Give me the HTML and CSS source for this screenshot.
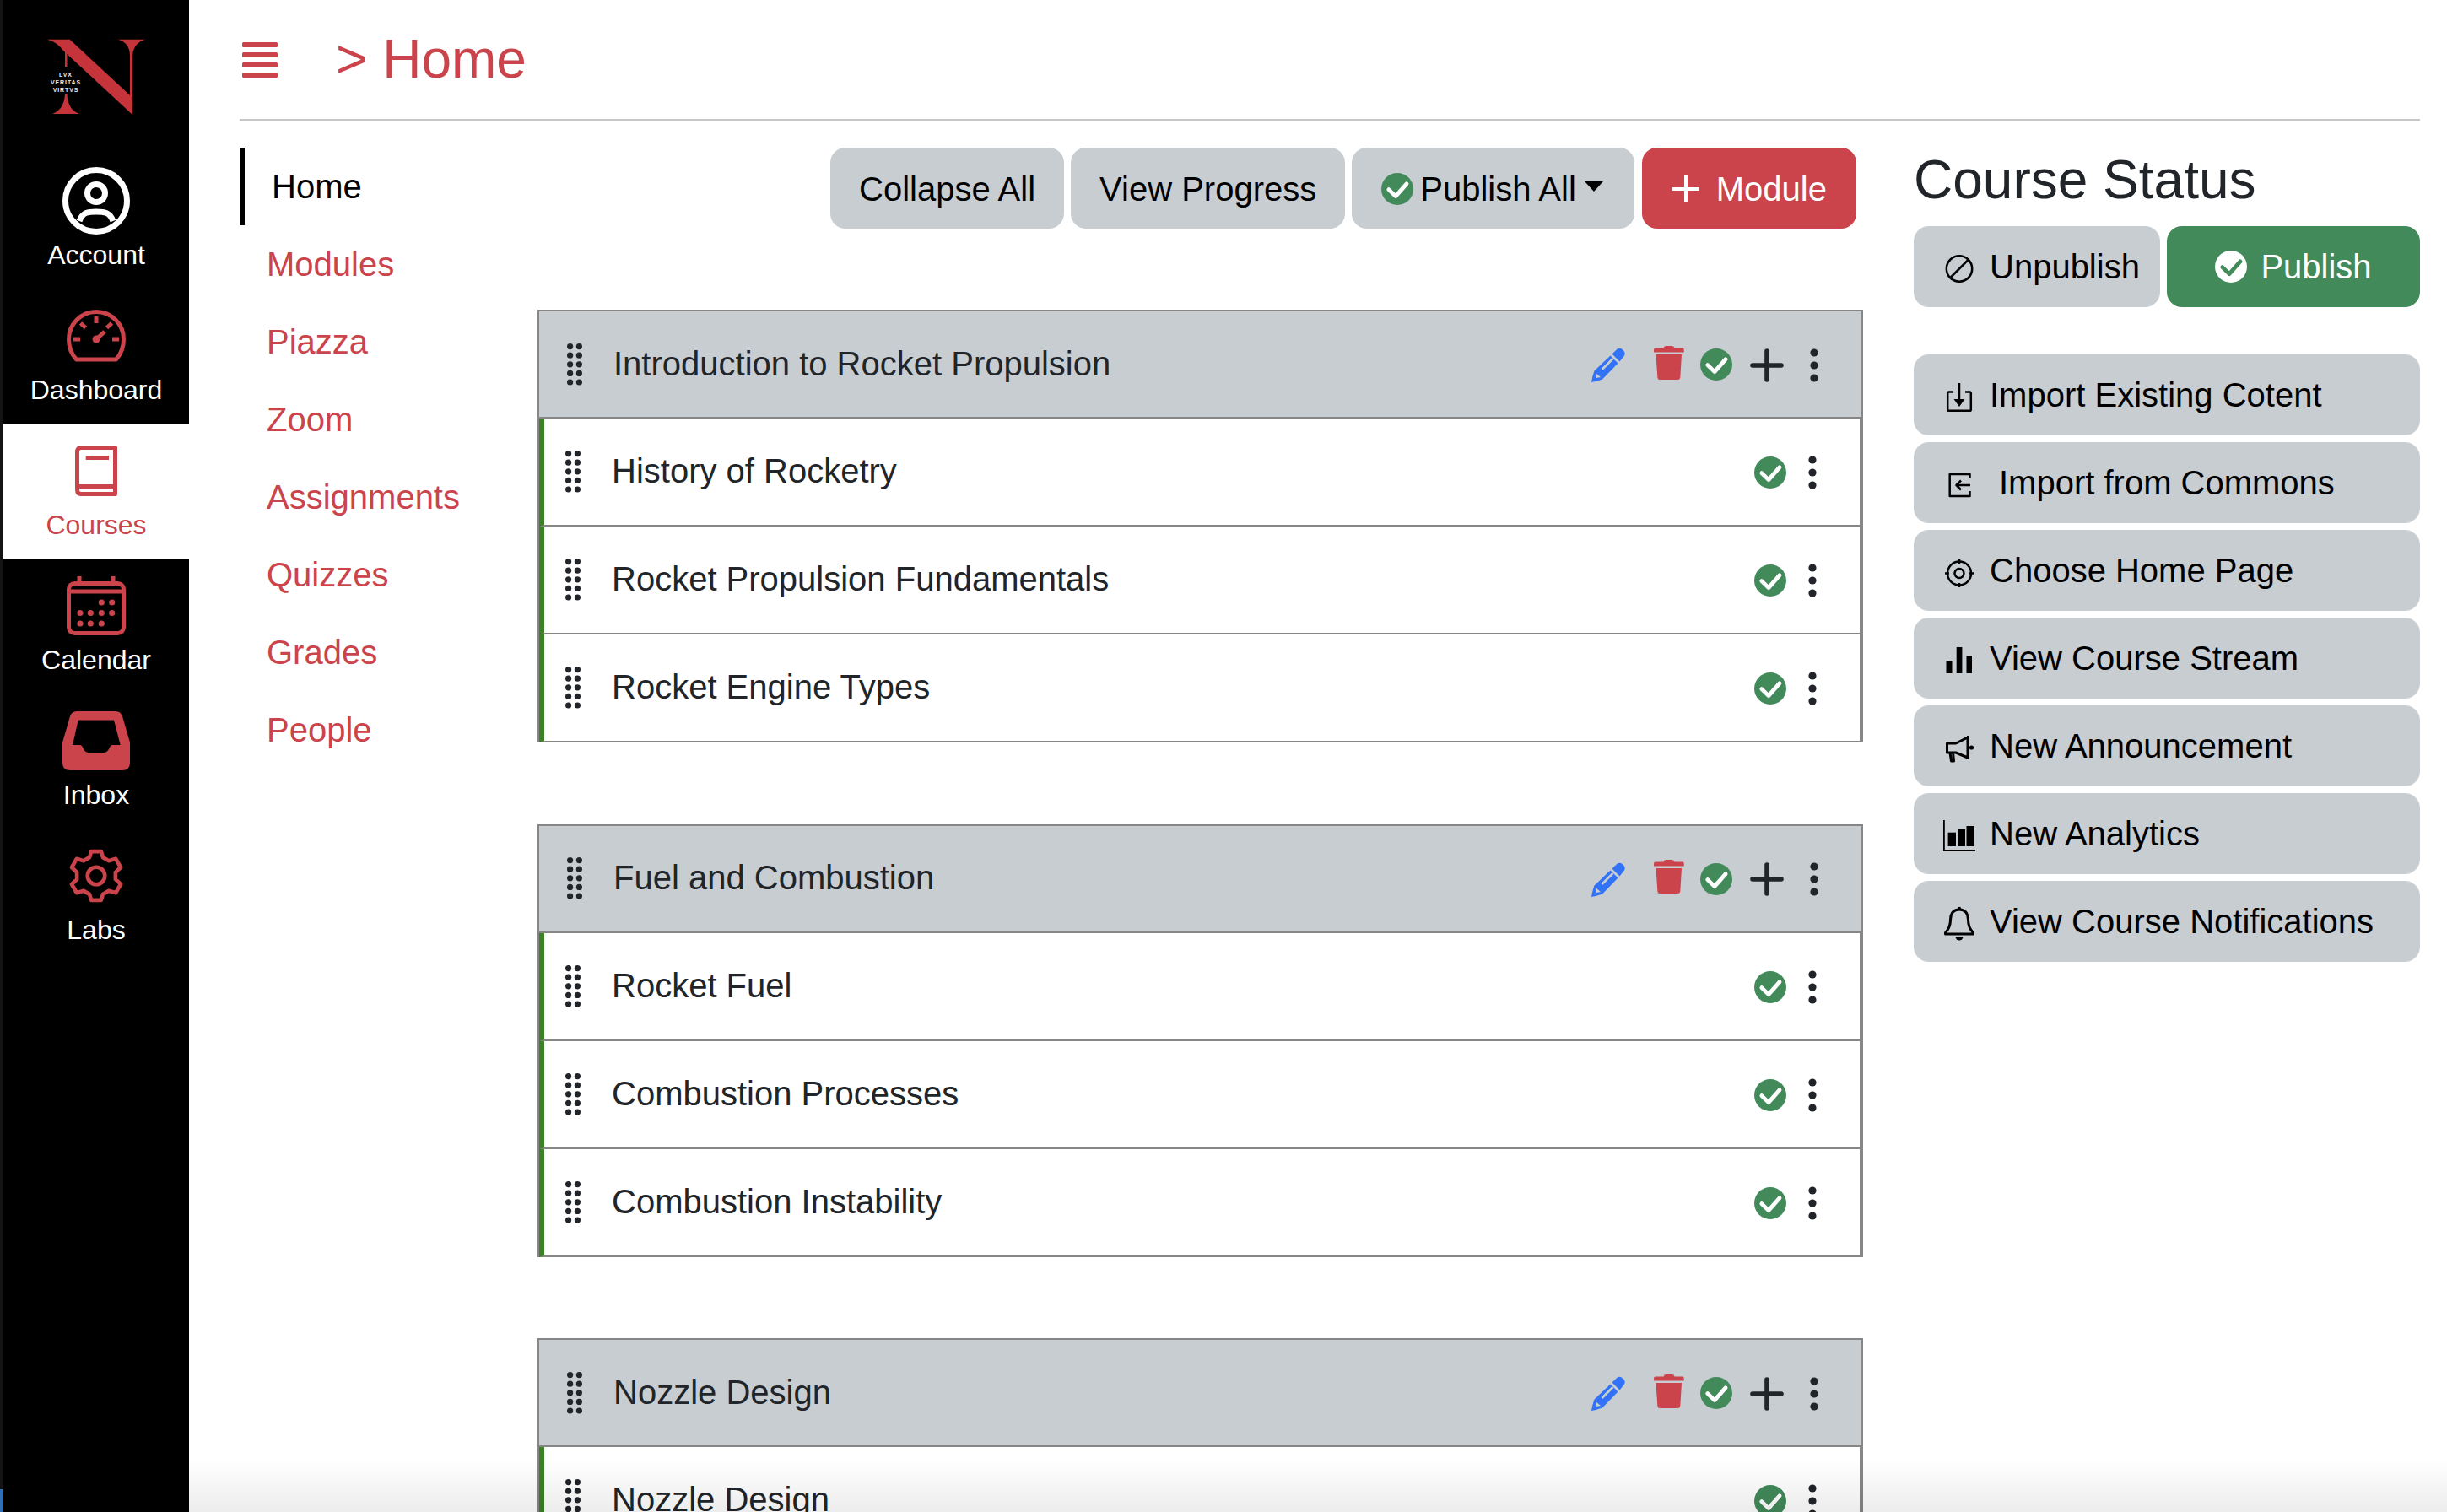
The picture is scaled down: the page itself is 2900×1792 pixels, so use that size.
FILE: index.html
```html
<!DOCTYPE html>
<html lang="en">
<head>
<meta charset="utf-8">
<title>Home</title>
<link rel="stylesheet" href="styles.css">
</head>
<body>
<svg class="defs" aria-hidden="true">
  <symbol id="chk" viewBox="0 0 38 38"><circle class="disc" cx="19" cy="19" r="19"/><path class="tick" d="M8.8 19.6 L17 27.6 L30 12.8"/></symbol>
  <symbol id="grip" viewBox="0 0 18 50"><g class="fillc"><circle cx="3.6" cy="3.6" r="3.6"/><circle cx="14.4" cy="3.6" r="3.6"/><circle cx="3.6" cy="14.2" r="3.6"/><circle cx="14.4" cy="14.2" r="3.6"/><circle cx="3.6" cy="24.8" r="3.6"/><circle cx="14.4" cy="24.8" r="3.6"/><circle cx="3.6" cy="35.4" r="3.6"/><circle cx="14.4" cy="35.4" r="3.6"/><circle cx="3.6" cy="46" r="3.6"/><circle cx="14.4" cy="46" r="3.6"/></g></symbol>
  <symbol id="kebab" viewBox="0 0 10 40"><g class="fillc"><circle cx="5" cy="5" r="4.6"/><circle cx="5" cy="20" r="4.6"/><circle cx="5" cy="35" r="4.6"/></g></symbol>
  <symbol id="pencil" viewBox="0 0 40 41"><path class="blue" d="M24.5 7.5 L30.5 1.7 Q33 0 35.5 1.2 L38.5 4 Q40.5 6.5 39 9.5 L33.5 16.5 Z"/><path class="blue" d="M22.5 9.5 L31.5 18.5 L13 37.5 Q6 40 0 41 Q1 34 3.5 27.5 Z"/><path class="slit" d="M12.5 26 L25.5 13"/><path class="slit2" d="M5.5 30.5 L6 36 L11 35"/></symbol>
  <symbol id="trash" viewBox="0 0 36 40"><path class="redf" d="M11.5 2.4 Q12 0 15 0 H21 Q24 0 24.5 2.4 H34 Q35.7 2.4 35.7 4.5 V7.5 H0 V4.5 Q0 2.4 2 2.4 Z"/><path class="redf" d="M2.4 10 H33 L31.3 37.5 Q31 40 28.5 40 H7 Q4.6 40 4.4 37.5 Z"/></symbol>
  <symbol id="plus" viewBox="0 0 40 40"><path class="plusline" d="M20 3 V37 M3 20 H37"/></symbol>
</svg>

<div class="app">
  <aside class="rail">
    <div class="logo">
      <svg width="116" height="90" viewBox="56 46 116 90">
        <path class="logo-n" d="M56 46.7 H82.7 L154 113 V66 Q154 51 140 46.7 H172 Q158 51 157 66 V136 L75 60 Q68 50 56 46.7 Z"/>
        <path class="logo-n" d="M77 58 H79.5 V79 H77 Z M77 111 H79.5 Q80 130 94 135 H62 Q76 130 77 111 Z"/>
        <text class="logo-t" x="78" y="91">LVX</text>
        <text class="logo-t" x="78" y="100">VERITAS</text>
        <text class="logo-t" x="78" y="108.5">VIRTVS</text>
      </svg>
    </div>
    <a class="rail-item">
      <svg class="rail-icon" viewBox="0 0 80 80"><g class="st-w"><circle cx="40" cy="40" r="36.5"/><circle cx="40" cy="31" r="10.5"/><path d="M20 64 C24 53 31 53 40 53 C49 53 56 53 60 64"/></g></svg>
      <span class="rail-label">Account</span>
    </a>
    <a class="rail-item">
      <svg class="rail-icon" viewBox="0 0 80 80"><g class="st-r"><path d="M16.5 68 H63.5 C69 62 72.5 54 72.5 44 A32.5 32.5 0 0 0 7.5 44 C7.5 54 11 62 16.5 68 Z"/><path d="M40 17 V25 M13 44 H21 M59 44 H67 M21.5 25 L27.5 30.5 M58.5 25 L52.5 30.5 M40 44 L50 35"/></g><circle class="redf" cx="40" cy="44" r="4.5"/></svg>
      <span class="rail-label">Dashboard</span>
    </a>
    <a class="rail-item is-active">
      <svg class="rail-icon" viewBox="0 0 80 80"><g class="st-r"><path d="M62.5 12.5 H22 Q17.5 12.5 17.5 18 V62 Q17.5 67.5 22 67.5 H62.5 Z"/><path d="M18.5 58.5 H62 M27.7 24.5 H55"/></g></svg>
      <span class="rail-label">Courses</span>
    </a>
    <a class="rail-item">
      <svg class="rail-icon" viewBox="0 0 80 80"><g class="st-r"><rect x="7.5" y="13.5" width="65" height="59" rx="7"/><path d="M7 23 H73 M20 5 V12 M60 5 V12"/></g><g class="redf"><circle cx="46.3" cy="36" r="3.6"/><circle cx="58.7" cy="36" r="3.6"/><circle cx="21" cy="48.5" r="3.6"/><circle cx="33.3" cy="48.5" r="3.6"/><circle cx="46.3" cy="48.5" r="3.6"/><circle cx="58.7" cy="48.5" r="3.6"/><circle cx="21" cy="61" r="3.6"/><circle cx="33.3" cy="61" r="3.6"/><circle cx="46.3" cy="61" r="3.6"/></g></svg>
      <span class="rail-label">Calendar</span>
    </a>
    <a class="rail-item">
      <svg class="rail-icon" viewBox="0 0 80 80"><path class="redf even" d="M17 5 H63 Q69 5 71 11 L80 42 V66 Q80 75 71 75 H9 Q0 75 0 66 V42 L9 11 Q11 5 17 5 Z M18.7 15.5 L12 45 H21 C25 45 24 54 31 54 H49 C56 54 55 45 59 45 H68.7 L61 15.5 Z"/></svg>
      <span class="rail-label">Inbox</span>
    </a>
    <a class="rail-item">
      <svg class="rail-icon" viewBox="-3 -3 86 86"><g class="st-r gear"><path d="M48.55 16.5 L46.3 9 H33.7 L31.45 16.5 L23.9 20.85 L15.1 18.35 L8.8 29.25 L15.4 35.65 V44.35 L8.8 50.75 L15.1 61.65 L23.9 59.15 L31.45 63.5 L33.7 71 H46.3 L48.55 63.5 L56.1 59.15 L64.9 61.65 L71.2 50.75 L64.6 44.35 V35.65 L71.2 29.25 L64.9 18.35 L56.1 20.85 Z"/><circle cx="40" cy="40" r="11"/></g></svg>
      <span class="rail-label">Labs</span>
    </a>
  </aside>

  <main class="main">
    <header class="topbar">
      <svg class="burger" width="42" height="42" viewBox="0 0 42 42"><g class="redf"><rect y="0" width="42" height="6" rx="1.5"/><rect y="12" width="42" height="6" rx="1.5"/><rect y="24" width="42" height="6" rx="1.5"/><rect y="36" width="42" height="6" rx="1.5"/></g></svg>
      <h1 class="crumb">&gt; Home</h1>
    </header>

    <div class="columns">
      <nav class="course-nav">
        <a class="course-link is-current">Home</a>
        <a class="course-link">Modules</a>
        <a class="course-link">Piazza</a>
        <a class="course-link">Zoom</a>
        <a class="course-link">Assignments</a>
        <a class="course-link">Quizzes</a>
        <a class="course-link">Grades</a>
        <a class="course-link">People</a>
      </nav>

      <section class="content">
        <div class="toolbar">
          <button class="btn btn-tool">Collapse All</button>
          <button class="btn btn-tool">View Progress</button>
          <button class="btn btn-publish-all"><svg class="chk chk-green"><use href="#chk"/></svg>Publish All<span class="caret"></span></button>
          <button class="btn btn-red"><svg class="btn-plus" viewBox="0 0 32 32"><path d="M16 1 V31 M1 16 H31"/></svg>Module</button>
        </div>

        <article class="module">
          <div class="mod-head">
            <svg class="grip"><use href="#grip"/></svg>
            <span class="mod-title">Introduction to Rocket Propulsion</span>
            <svg class="a-pencil"><use href="#pencil"/></svg>
            <svg class="a-trash"><use href="#trash"/></svg>
            <svg class="chk chk-green a-chk"><use href="#chk"/></svg>
            <svg class="a-plus"><use href="#plus"/></svg>
            <svg class="kebab"><use href="#kebab"/></svg>
          </div>
          <div class="lesson"><svg class="grip"><use href="#grip"/></svg><span class="mod-title">History of Rocketry</span><svg class="chk chk-green"><use href="#chk"/></svg><svg class="kebab"><use href="#kebab"/></svg></div>
          <div class="lesson"><svg class="grip"><use href="#grip"/></svg><span class="mod-title">Rocket Propulsion Fundamentals</span><svg class="chk chk-green"><use href="#chk"/></svg><svg class="kebab"><use href="#kebab"/></svg></div>
          <div class="lesson"><svg class="grip"><use href="#grip"/></svg><span class="mod-title">Rocket Engine Types</span><svg class="chk chk-green"><use href="#chk"/></svg><svg class="kebab"><use href="#kebab"/></svg></div>
        </article>

        <article class="module">
          <div class="mod-head">
            <svg class="grip"><use href="#grip"/></svg>
            <span class="mod-title">Fuel and Combustion</span>
            <svg class="a-pencil"><use href="#pencil"/></svg>
            <svg class="a-trash"><use href="#trash"/></svg>
            <svg class="chk chk-green a-chk"><use href="#chk"/></svg>
            <svg class="a-plus"><use href="#plus"/></svg>
            <svg class="kebab"><use href="#kebab"/></svg>
          </div>
          <div class="lesson"><svg class="grip"><use href="#grip"/></svg><span class="mod-title">Rocket Fuel</span><svg class="chk chk-green"><use href="#chk"/></svg><svg class="kebab"><use href="#kebab"/></svg></div>
          <div class="lesson"><svg class="grip"><use href="#grip"/></svg><span class="mod-title">Combustion Processes</span><svg class="chk chk-green"><use href="#chk"/></svg><svg class="kebab"><use href="#kebab"/></svg></div>
          <div class="lesson"><svg class="grip"><use href="#grip"/></svg><span class="mod-title">Combustion Instability</span><svg class="chk chk-green"><use href="#chk"/></svg><svg class="kebab"><use href="#kebab"/></svg></div>
        </article>

        <article class="module">
          <div class="mod-head">
            <svg class="grip"><use href="#grip"/></svg>
            <span class="mod-title">Nozzle Design</span>
            <svg class="a-pencil"><use href="#pencil"/></svg>
            <svg class="a-trash"><use href="#trash"/></svg>
            <svg class="chk chk-green a-chk"><use href="#chk"/></svg>
            <svg class="a-plus"><use href="#plus"/></svg>
            <svg class="kebab"><use href="#kebab"/></svg>
          </div>
          <div class="lesson"><svg class="grip"><use href="#grip"/></svg><span class="mod-title">Nozzle Design</span><svg class="chk chk-green"><use href="#chk"/></svg><svg class="kebab"><use href="#kebab"/></svg></div>
        </article>
      </section>

      <aside class="status">
        <h2 class="status-title">Course Status</h2>
        <div class="status-btns">
          <button class="btn btn-side">
            <svg class="side-ico" viewBox="0 0 36 40"><g class="st-k"><circle cx="18" cy="22.5" r="15.2"/><path d="M7.5 33 L28.5 12"/></g></svg>Unpublish
          </button>
          <button class="btn btn-green"><svg class="chk chk-white"><use href="#chk"/></svg>Publish</button>
        </div>
        <div class="side-list">
          <button class="btn btn-side">
            <svg class="side-ico" viewBox="0 0 36 40"><g class="st-k"><path d="M11 16.5 H5.5 Q4.2 16.5 4.2 18 V37.5 Q4.2 38.8 5.5 38.8 H30.5 Q31.8 38.8 31.8 37.5 V18 Q31.8 16.5 30.5 16.5 H25"/><path d="M18 6 V28"/></g><path class="blackf" d="M11.5 25 L18 34 L24.5 25 Z"/></svg>Import Existing Cotent
          </button>
          <button class="btn btn-side">
            <svg class="side-ico ico-wide" viewBox="0 0 36 40"><g class="st-k"><path d="M30.5 15 V10 H6.7 V36 H30.5 V30"/><path d="M31 23 H15 M20 17.5 L14.5 23 L20 28.5"/></g></svg>Import from Commons
          </button>
          <button class="btn btn-side">
            <svg class="side-ico" viewBox="0 0 36 40"><g class="st-k"><circle cx="18" cy="23.5" r="14"/><circle cx="18" cy="23.5" r="5.5"/><path d="M18 7 V12 M18 35 V40 M1 23.5 H6 M30 23.5 H35"/></g></svg>Choose Home Page
          </button>
          <button class="btn btn-side">
            <svg class="side-ico" viewBox="0 0 36 40"><g class="blackf"><rect x="2.5" y="23" width="7" height="15"/><rect x="14.7" y="7" width="6.7" height="31"/><rect x="26.5" y="17" width="6.5" height="21"/></g></svg>View Course Stream
          </button>
          <button class="btn btn-side">
            <svg class="side-ico" viewBox="0 0 36 40"><g class="st-k st-bold"><path d="M3.5 17 H14 L28 10 V34 L14 28 H3.5 Z"/><path d="M7 28 L8.5 38 H11.5 L10.5 28"/><path d="M28.5 8 V36"/></g><circle class="blackf" cx="32.5" cy="22" r="2.6"/></svg>New Announcement
          </button>
          <button class="btn btn-side">
            <svg class="side-ico" viewBox="0 0 36 40"><g class="blackf"><rect x="-1" y="4" width="1.8" height="37"/><rect x="-1" y="39" width="38" height="2"/><rect x="4.6" y="18.7" width="9.4" height="16.3"/><rect x="16" y="15" width="9" height="20"/><rect x="26.5" y="11" width="9.5" height="24"/></g></svg>New Analytics
          </button>
          <button class="btn btn-side">
            <svg class="side-ico" viewBox="0 0 36 40"><g class="st-k st-bold"><path d="M18 6 C10 6 7.5 12 7.5 18 C7.5 26 5 30 1.5 33.5 V35 H34.5 V33.5 C31 30 28.5 26 28.5 18 C28.5 12 26 6 18 6 Z"/></g><g class="blackf"><circle cx="18" cy="5" r="2.2"/><path d="M13.5 38 H22.5 A4.5 4.5 0 0 1 13.5 38 Z"/></g></svg>View Course Notifications
          </button>
        </div>
      </aside>
    </div>
  </main>
</div>
<div class="dock-shadow"></div>
<div class="edge-blue"></div>
</body>
</html>
```
FILE: styles.css
```css
:root {
  --red: #cb444b;
  --green: #428a5a;
  --gray: #c7cdd1;
  --line: #868686;
  --ink: #212529;
}
* { box-sizing: border-box; }
html, body { margin: 0; height: 100%; }
body {
  height: 1792px;
  overflow: hidden;
  background: #fff;
  font-family: "Liberation Sans", Arial, sans-serif;
  font-size: 40px;
  color: var(--ink);
}
.defs { position: absolute; width: 0; height: 0; }

/* shared svg paints */
.redf { fill: var(--red); }
.blackf { fill: #000; }
.fillc { fill: var(--ink); }
.even { fill-rule: evenodd; }
.blue { fill: #3172f6; }
.slit { fill: none; stroke: #c7cdd1; stroke-width: 2.6; }
.slit2 { fill: #c7cdd1; stroke: none; }
.st-w, .st-r, .st-k { fill: none; stroke-linejoin: round; }
.st-w { stroke: #fff; stroke-width: 7; }
.st-r { stroke: var(--red); stroke-width: 5; }
.st-k { stroke: #000; stroke-width: 2.5; }
.st-bold { stroke-width: 3; }
.gear { stroke-width: 5; }
.disc { fill: var(--disc); }
.tick { fill: none; stroke: var(--tick); stroke-width: 4.8; stroke-linecap: round; stroke-linejoin: round; }
.plusline { fill: none; stroke: var(--ink); stroke-width: 5.6; stroke-linecap: round; }

.app { display: flex; height: 1792px; }

/* left rail */
.rail {
  flex: 0 0 224px;
  background: #000;
  border-left: 4px solid #141414;
}
.logo { height: 182px; padding-top: 46px; display: flex; justify-content: center; align-items: flex-start; }
.logo-n { fill: #c5343a; }
.logo-t { fill: #e8e8e8; font: bold 7px "Liberation Sans", sans-serif; text-anchor: middle; letter-spacing: .9px; }
.rail-item {
  height: 160px;
  padding-top: 16px;
  display: flex;
  flex-direction: column;
  align-items: center;
  color: #fff;
}
.rail-icon { width: 80px; height: 80px; overflow: visible; flex: none; }
.rail-label { margin-top: 4px; font-size: 32px; line-height: 40px; }
.rail-item.is-active { background: #fff; color: var(--red); }

/* main */
.main { flex: 1; min-width: 0; padding: 0 32px 0 60px; }
.topbar {
  height: 143px;
  border-bottom: 2px solid #c8c8c8;
  display: flex;
  align-items: flex-start;
}
.burger { margin: 50px 0 0 3px; flex: none; }
.crumb {
  margin: 33px 0 0 69px;
  font-size: 64px;
  line-height: 74px;
  font-weight: 400;
  color: var(--red);
}
.columns { display: flex; padding-top: 32px; }

.course-nav { flex: 0 0 353px; display: flex; flex-direction: column; }
.course-link {
  height: 92px;
  padding-left: 32px;
  display: flex;
  align-items: center;
  color: var(--red);
}
.course-link.is-current { color: #000; border-left: 6px solid #000; padding-left: 32px; }

.content { flex: 0 0 1571px; }
.toolbar { display: flex; justify-content: flex-end; gap: 8px; padding-right: 8px; margin-bottom: 96px; }

.btn {
  height: 96px;
  padding: 0 36px;
  border: 0;
  border-radius: 18px;
  background: var(--gray);
  color: #000;
  font: inherit;
  display: flex;
  align-items: center;
  white-space: nowrap;
}
.toolbar .btn { padding-top: 2px; }
.btn-tool { padding: 0 34px; }
.btn-red { background: var(--red); color: #fff; padding-right: 35px; margin-left: 1px; }
.btn-plus { width: 32px; height: 32px; margin-right: 20px; fill: none; stroke: #fff; stroke-width: 4; stroke-linecap: round; }
.btn-publish-all { padding: 0 37px 0 35px; }
.btn-publish-all .chk { margin-right: 8px; }
.caret {
  width: 0; height: 0;
  margin: -6px 0 0 10px;
  border-left: 11px solid transparent;
  border-right: 11px solid transparent;
  border-top: 12px solid #000;
}
.chk { width: 38px; height: 38px; flex: none; }
.chk-green { --disc: var(--green); --tick: #fff; }
.chk-white { --disc: #fff; --tick: var(--green); }

/* modules */
.module {
  margin-bottom: 96.5px;
  border: solid var(--line);
  border-width: 2px 2px 0;
}
.mod-head {
  height: 127px;
  padding: 0 51px 0 33px;
  background: var(--gray);
  border-bottom: 2px solid var(--line);
  display: flex;
  align-items: center;
}
.lesson {
  height: 128px;
  padding: 0 51px 0 25px;
  background: #fff;
  border-left: 6px solid #3b8226;
  border-right: 2px solid var(--line);
  border-bottom: 2px solid var(--line);
  display: flex;
  align-items: center;
}
.grip { width: 18px; height: 50px; margin-right: 37px; flex: none; }
.mod-title { flex: 1; line-height: 46px; margin-bottom: 2px; }
.kebab { width: 10px; height: 40px; margin: 2px 0 0 26px; flex: none; }
.lesson .chk { margin-top: 2px; }
.a-pencil { width: 40px; height: 41px; margin-top: 2px; flex: none; }
.a-trash { width: 36px; height: 40px; margin-left: 34px; margin-top: -4px; flex: none; }
.a-chk { margin: 1px 0 0 19px; }
.a-plus { width: 40px; height: 40px; margin: 2px 0 0 21px; flex: none; }
.mod-head .kebab { margin-left: 31px; }

/* right column */
.status { flex: 0 0 600px; margin-left: 60px; }
.status-title {
  height: 93px;
  margin: 0;
  font-size: 64px;
  line-height: 76px;
  font-weight: 400;
}
.status-btns { display: grid; grid-template-columns: 292px 300px; gap: 8px; margin-bottom: 56px; }
.btn-green { background: var(--green); color: #fff; justify-content: center; padding: 0; }
.btn-green .chk { margin-right: 16px; }
.side-list { display: flex; flex-direction: column; gap: 8px; }
.btn-side { width: 100%; }
.status-btns .btn-side { width: auto; }
.side-ico { width: 36px; height: 40px; margin-right: 18px; overflow: visible; flex: none; }
.ico-wide { margin-right: 29px; }

/* overlays */
.dock-shadow {
  position: fixed;
  left: 224px; right: 0; bottom: 0;
  height: 62px;
  background: linear-gradient(to bottom, rgba(0,0,0,0), rgba(0,0,0,.075));
  pointer-events: none;
}
.edge-blue {
  position: fixed;
  left: 0; bottom: 0;
  width: 4px; height: 27px;
  background: #2f6fb5;
}
```
